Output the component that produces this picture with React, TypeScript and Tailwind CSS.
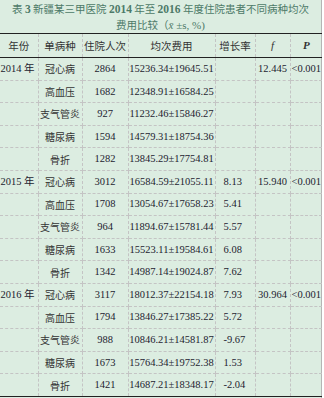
const groups = [
  {
    year: "2014 年",
    f: "12.445",
    p: "<0.001",
    rows: [
      ["冠心病", "2864", "15236.34±19645.51", ""],
      ["高血压", "1682", "12348.91±16584.25", ""],
      ["支气管炎", "927", "11232.46±15846.27", ""],
      ["糖尿病", "1594", "14579.31±18754.36", ""],
      ["骨折", "1282", "13845.29±17754.81", ""],
    ],
  },
  {
    year: "2015 年",
    f: "15.940",
    p: "<0.001",
    rows: [
      ["冠心病", "3012", "16584.59±21055.11", "8.13"],
      ["高血压", "1708", "13054.67±17658.23", "5.41"],
      ["支气管炎", "964", "11894.67±15781.44", "5.57"],
      ["糖尿病", "1633", "15523.11±19584.61", "6.08"],
      ["骨折", "1342", "14987.14±19024.87", "7.62"],
    ],
  },
  {
    year: "2016 年",
    f: "30.964",
    p: "<0.001",
    rows: [
      ["冠心病", "3117", "18012.37±22154.18", "7.93"],
      ["高血压", "1794", "13846.27±17385.22", "5.72"],
      ["支气管炎", "988", "10846.21±14581.87", "-9.67"],
      ["糖尿病", "1673", "15764.34±19752.38", "1.53"],
      ["骨折", "1421", "14687.21±18348.17", "-2.04"],
    ],
  },
];

const cell = "border-r border-b border-dashed border-[#c4c4c4] p-0 whitespace-nowrap";
const serif = "font-['Liberation_Serif','Noto_Sans_CJK_SC',serif]";
const cjk = "font-['Noto_Sans_CJK_SC',sans-serif]";

export default function App() {
  return (
    <div className="w-[324px] h-[398px] bg-white overflow-hidden">
      <div className="w-[322px] h-[398px] bg-[#dcede1] border-r border-[#b5b5b5]">
        <div className={`h-[33px] pt-[1px] text-center text-[10.5px] leading-[15px] text-[#4d7a68] whitespace-nowrap ${cjk}`}>
          <div>
            表 <b className={`${serif} text-[11.5px]`}>3</b> 新疆某三甲医院 <b className={`${serif} text-[11.5px]`}>2014</b> 年至{" "}
            <b className={`${serif} text-[11.5px]`}>2016</b> 年度住院患者不同病种均次
          </div>
          <div>
            费用比较（<i className={`${serif} text-[11px]`}>x̄</i>
            <span className={`${serif} text-[11px]`}> ±s, %)</span>
          </div>
        </div>
        <table className="table-fixed border-collapse w-[322px] text-[#1c1c30]">
          <colgroup>
            <col className="w-[38px]" />
            <col className="w-[44px]" />
            <col className="w-[46px]" />
            <col className="w-[87px]" />
            <col className="w-[40px]" />
            <col className="w-[35px]" />
            <col className="w-[32px]" />
          </colgroup>
          <thead>
            <tr className="h-[24px] border-t-[1.5px] border-b-[1.5px] border-t-[#222] border-b-[#222] text-[10.5px] text-[#333]">
              <th className={`${cell} border-b-0 font-normal ${cjk}`}>年份</th>
              <th className={`${cell} border-b-0 font-normal ${cjk}`}>单病种</th>
              <th className={`${cell} border-b-0 font-normal ${cjk}`}>住院人次</th>
              <th className={`${cell} border-b-0 font-normal ${cjk}`}>均次费用</th>
              <th className={`${cell} border-b-0 font-normal ${cjk}`}>增长率</th>
              <th className={`${cell} border-b-0 font-normal italic text-[11px] ${serif}`}>f</th>
              <th className={`border-b-0 p-0 font-bold italic text-[11px] ${serif}`}>P</th>
            </tr>
          </thead>
          <tbody className="text-[10.5px]">
            {groups.map((g, gi) =>
              g.rows.map((r, ri) => {
                const last = gi === groups.length - 1 && ri === g.rows.length - 1;
                return (
                  <tr
                    key={`${gi}-${ri}`}
                    className={`h-[22.6px] ${last ? "border-b-[1.5px] border-b-[#222]" : ""}`}
                  >
                    <td className={`${cell} text-right pr-[3px] ${serif}`}>{ri === 0 ? g.year : ""}</td>
                    <td className={`${cell} text-center text-[10px] text-[#333] ${cjk}`}>{r[0]}</td>
                    <td className={`${cell} text-center ${serif}`}>{r[1]}</td>
                    <td className={`${cell} text-center ${serif}`}>{r[2]}</td>
                    <td className={`${cell} pl-[8px] ${serif}`}>{r[3]}</td>
                    <td className={`${cell} text-center ${serif}`}>{ri === 0 ? g.f : ""}</td>
                    <td className={`border-b border-dashed border-[#c4c4c4] p-0 whitespace-nowrap text-center ${serif}`}>
                      {ri === 0 ? g.p : ""}
                    </td>
                  </tr>
                );
              })
            )}
          </tbody>
        </table>
      </div>
    </div>
  );
}
